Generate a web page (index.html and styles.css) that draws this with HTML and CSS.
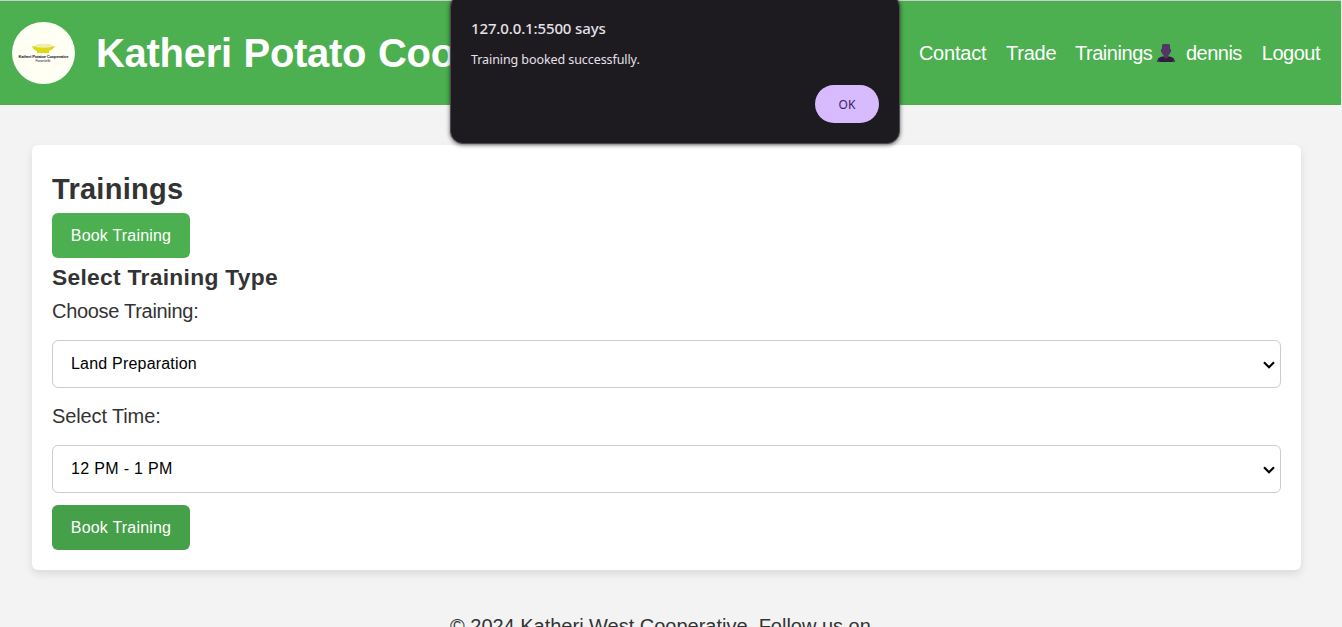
FILE: index.html
```html
<!DOCTYPE html>
<html lang="en">
<head>
<meta charset="utf-8">
<title>Trainings</title>
<link rel="stylesheet" href="styles.css">
</head>
<body>
<header class="header">
  <svg class="logo" viewBox="0 0 63 62">
    <ellipse cx="31.5" cy="31" rx="31.5" ry="31" fill="#fffff4"/>
    <path d="M21 25Q25 21 31 22Q39 21 42 25Z" fill="#f0edb0"/>
    <path d="M20 24Q31 27 43 24Q41 28 37 29V31H25V29Q21 28 20 24Z" fill="#dcd916"/>
    <text class="logo-name" x="31.5" y="36" text-anchor="middle" textLength="50">Katheri Potatoe Cooperative</text>
    <text class="logo-tag" x="31" y="40" text-anchor="middle" textLength="15">Passion for life</text>
  </svg>
  <div class="brand">Katheri Potato Coo</div>
  <nav class="nav">
    <a class="nav-link contact">Contact</a>
    <a class="nav-link trade">Trade</a>
    <a class="nav-link trainings">Trainings</a>
    <svg class="user-icon" viewBox="0 0 18 18"><path d="M0 18L1 15Q2 13 6 12.5H12Q16 13 17 15L18 18Z" fill="#321b41"/><path d="M5 1L6 0H12L13 1V5H14V8L13 9L12 11L11 12V13L9 15L7 13V12L6 11L5 9L4 8V5H5Z" fill="#533566"/><path d="M1 15L3 18H0ZM17 15L15 18H18Z" fill="#533566"/></svg>
    <a class="nav-link user">dennis</a>
    <a class="nav-link logout">Logout</a>
  </nav>
</header>
<main class="card">
  <h1 class="title">Trainings</h1>
  <button class="book">Book Training</button>
  <h2 class="subtitle">Select Training Type</h2>
  <div class="label choose">Choose Training:</div>
  <div class="select"><span class="land">Land Preparation</span><svg class="chevron" viewBox="0 0 12 8"><path d="M1 1.2L6 6.2L11 1.2" fill="none" stroke="#000" stroke-width="2.1"/></svg></div>
  <div class="label time">Select Time:</div>
  <div class="select"><span class="hour">12 PM - 1 PM</span><svg class="chevron" viewBox="0 0 12 8"><path d="M1 1.2L6 6.2L11 1.2" fill="none" stroke="#000" stroke-width="2.1"/></svg></div>
  <button class="book active">Book Training</button>
</main>
<footer class="footer">© 2024 Katheri West Cooperative. Follow us on</footer>
<div class="dialog">
  <div class="dialog-title">127.0.0.1:5500 says</div>
  <div class="dialog-text">Training booked successfully.</div>
  <button class="ok">OK</button>
</div>
</body>
</html>
```
FILE: styles.css
```css
* { box-sizing: border-box; }
body { margin: 0; height: 627px; overflow: hidden; position: relative; background: #f3f3f3; color: #333; font-family: "Liberation Sans", Arial, sans-serif; white-space: nowrap; }
.header { height: 105px; margin-right: 1px; padding: 0 21px 0 12px; display: flex; align-items: center; background: #4caf50; border-top: 1px solid #ccc; color: #fff; }
.logo { width: 63px; height: 62px; flex: none; }
.logo-name { font-size: 4.2px; font-weight: bold; fill: #223; }
.logo-tag { font-size: 3px; fill: #334; }
.brand { margin-left: 21px; font-size: 40px; font-weight: bold; line-height: 60px; letter-spacing: -.3px; word-spacing: 1px; }
.nav { display: flex; align-items: center; margin-left: auto; font-size: 20px; line-height: 30px; letter-spacing: -.2px; }
.trade { margin-left: 19.5px; }
.trainings { margin-left: 18.5px; letter-spacing: -.45px; }
.user-icon { width: 18px; height: 18px; margin-left: 4.5px; }
.user { margin-left: 11px; letter-spacing: -.5px; }
.logout { margin-left: 20px; letter-spacing: -.5px; }
.card { margin: 40px 41px 0 32px; padding: 20px; height: 425px; display: flex; flex-direction: column; align-items: flex-start; background: #fff; border-radius: 6px; box-shadow: 0 4px 8px rgba(0,0,0,.1); }
.title { margin: 0; height: 48px; line-height: 48px; font-size: 29px; letter-spacing: .27px; }
.book { width: 138px; height: 45px; padding: 0; border: 0; border-radius: 6px; background: #4caf50; color: #fff; font: 16px "Liberation Sans", Arial, sans-serif; letter-spacing: .2px; }
.active { background: #45a049; margin-top: 12px; }
.subtitle { margin: 0; height: 38px; line-height: 38px; font-size: 22.8px; letter-spacing: .3px; }
.label { height: 31px; line-height: 30px; margin-bottom: 13px; font-size: 20px; letter-spacing: -.3px; }
.time { margin-top: 13px; letter-spacing: -.12px; }
.select { width: 100%; height: 48px; padding: 0 5px 0 18px; display: flex; align-items: center; justify-content: space-between; border: 1px solid #ccc; border-radius: 6px; color: #000; font-size: 16px; }
.land { letter-spacing: .2px; }
.hour { letter-spacing: .33px; }
.chevron { width: 12px; height: 8px; margin-top: 1px; }
.footer { padding: 43px 0 0 450px; font-size: 20px; line-height: 26px; letter-spacing: -.01px; }
.dialog { position: absolute; left: 450px; top: -6px; width: 450px; height: 150px; padding: 23px 20px 20px; display: flex; flex-direction: column; border: 1px solid #4b4a4e; border-radius: 13px; background: #1e1b20; color: #e6e0e8; box-shadow: 0 1px 4px rgba(0,0,0,.6); font-family: "Noto Sans", sans-serif; }
.dialog-title { height: 20px; line-height: 20px; font-size: 15px; font-weight: 500; letter-spacing: -.13px; }
.dialog-text { margin-top: 12px; height: 20px; line-height: 20px; font-size: 12.5px; letter-spacing: -.08px; }
.ok { align-self: flex-end; width: 64px; height: 38px; margin-top: 15px; padding: 0; border: 0; border-radius: 19px; background: #d8baff; color: #3b1c68; font: 12px "Noto Sans", sans-serif; }
```
